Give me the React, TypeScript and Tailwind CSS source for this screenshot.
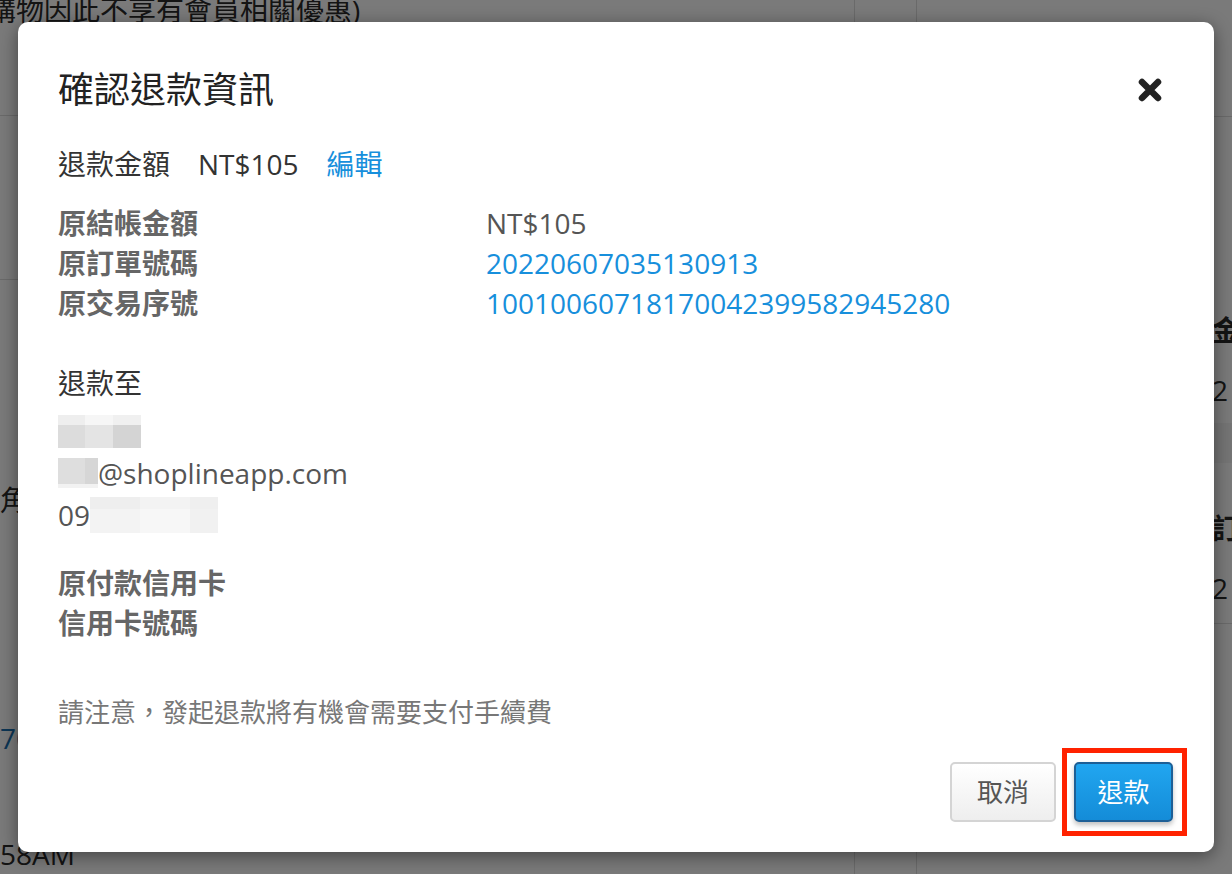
import React from 'react';

const font = { fontFamily: '"Open Sans", "Noto Sans CJK TC", sans-serif' };

const Backdrop: React.FC = () => {
  return (
    <div className="absolute inset-0 flex bg-white text-[#2a2a2a]">
      {/* left strip of the page behind */}
      <div className="flex w-[855px] flex-col overflow-hidden border-r border-[#ddd]">
        <div className="h-[117px] border-b border-[#ddd]">
          <div className="-mt-[10px] -ml-[12px] whitespace-nowrap text-[28px] leading-[40px]">
            購物因此不享有會員相關優惠)
          </div>
        </div>
        <div className="h-[166px] border-b border-[#ddd]" />
        <div className="h-[202px]" />
        <div className="text-[28px] leading-[40px]">角</div>
        <div className="h-[200px]" />
        <div className="text-[28px] leading-[40px] text-[#1a6fb0]">70</div>
        <div className="h-[77px]" />
        <div className="text-[28px] leading-[40px]">58AM</div>
      </div>
      <div className="w-[62px] border-r border-[#ddd]" />
      <div className="flex flex-1 flex-col overflow-hidden">
        <div className="h-[117px] border-b border-[#ddd]" />
        <div className="h-[193px]" />
        <div className="pl-[1197px] text-[0px]" />
        <div className="flex flex-col pl-[295px] text-[28px] leading-[40px]">
          <div className="font-bold">金</div>
          <div className="mt-[20px]">2</div>
          <div className="mt-[13px] h-[40px] bg-[#f4f4f4]" />
          <div className="mt-[45px] font-bold">訂</div>
          <div className="mt-[20px]">2</div>
          <div className="mt-[15px] border-b border-[#ddd]" />
        </div>
      </div>
    </div>
  );
};

const CloseIcon: React.FC = () => (
  <svg width="26" height="26" viewBox="0 0 26 26" className="text-[#222]">
    <path d="M5 5 L21 21 M21 5 L5 21" stroke="currentColor" strokeWidth="6.5" strokeLinecap="round" />
  </svg>
);

const Row: React.FC<{ label: string; value: string; blue?: boolean }> = ({ label, value, blue }) => (
  <div className="flex h-[40px] items-center">
    <div className="w-[428px] font-bold text-[#666]">{label}</div>
    <div className={blue ? 'text-[#178fdc]' : 'text-[#555]'}>{value}</div>
  </div>
);

export default function App() {
  return (
    <div className="relative h-[874px] w-[1232px] overflow-hidden" style={font}>
      <Backdrop />
      <div className="absolute inset-0 bg-black/[0.52]" />

      {/* modal */}
      <div className="absolute left-[18px] top-[22px] flex h-[830px] w-[1196px] flex-col rounded-[10px] bg-white pt-[44px] pr-[41px] pb-[30px] pl-[40px] text-[28px] shadow-[0_4px_18px_rgba(0,0,0,0.45)]">
        <div className="flex h-[48px] items-center justify-between pr-[10px]">
          <h2 className="text-[36px] leading-[48px] text-[#222]">確認退款資訊</h2>
          <button className="flex items-center justify-center">
            <CloseIcon />
          </button>
        </div>

        <div className="mt-[30px] flex h-[40px] items-center leading-[40px] text-[#333]">
          <span>退款金額</span>
          <span className="ml-[28px]">NT$105</span>
          <span className="ml-[28px] text-[#178fdc]">編輯</span>
        </div>

        <div className="mt-[19px] flex flex-col">
          <Row label="原結帳金額" value="NT$105" />
          <Row label="原訂單號碼" value="20220607035130913" blue />
          <Row label="原交易序號" value="10010060718170042399582945280" blue />
        </div>

        <div className="mt-[40px] h-[40px] leading-[40px] text-[#333]">退款至</div>
        <div className="mt-[7px] flex flex-col text-[#555]">
          <div className="flex h-[42px] items-start pt-[5px]">
            <div className="flex flex-col">
              <div className="flex h-[10px]">
                <div className="w-[27px] bg-[#eeeeee]" />
                <div className="w-[28px] bg-[#f6f6f6]" />
                <div className="w-[28px] bg-[#f0f0f0]" />
              </div>
              <div className="flex h-[23px]">
                <div className="w-[27px] bg-[#dcdcdc]" />
                <div className="w-[28px] bg-[#e4e4e4]" />
                <div className="w-[28px] bg-[#d4d4d4]" />
              </div>
            </div>
          </div>
          <div className="flex h-[42px] items-center">
            <div className="flex h-[30px] flex-col">
              <div className="flex h-[26px]">
                <div className="w-[27px] bg-[#dedede]" />
                <div className="w-[13px] bg-[#d6d6d6]" />
              </div>
              <div className="h-[4px] w-[40px] bg-[#f2f2f2]" />
            </div>
            <span className="leading-[40px]">@shoplineapp.com</span>
          </div>
          <div className="flex h-[42px] items-center">
            <span className="leading-[40px]">09</span>
            <div className="flex h-[36px] flex-col">
              <div className="flex h-[12px]">
                <div className="w-[50px] bg-[#eeeeee]" />
                <div className="w-[50px] bg-[#f3f3f3]" />
                <div className="w-[28px] bg-[#efefef]" />
              </div>
              <div className="flex h-[24px]">
                <div className="w-[50px] bg-[#f3f3f3]" />
                <div className="w-[50px] bg-[#f7f7f7]" />
                <div className="w-[28px] bg-[#f1f1f1]" />
              </div>
            </div>
          </div>
        </div>

        <div className="mt-[27px] flex flex-col font-bold leading-[40px] text-[#666]">
          <div className="h-[40px]">原付款信用卡</div>
          <div className="h-[40px]">信用卡號碼</div>
        </div>

        <div className="mt-[49px] h-[40px] text-[26px] leading-[40px] text-[#777]">
          請注意，發起退款將有機會需要支付手續費
        </div>

        <div className="mt-auto flex items-center justify-end gap-[18px]">
          <button className="h-[60px] w-[106px] rounded-[5px] border-2 border-[#d4d4d4] bg-gradient-to-b from-white to-[#eeeeee] text-[26px] text-[#555]">
            取消
          </button>
          <div className="relative">
            <button className="h-[60px] w-[99px] rounded-[5px] border-2 border-[#1d5f96] bg-gradient-to-b from-[#21a6f0] to-[#148cd8] text-[26px] text-white shadow-[0_3px_5px_rgba(0,0,0,0.25)]">
              退款
            </button>
            <div className="pointer-events-none absolute -top-[14px] -bottom-[14px] -left-[12px] -right-[14px] border-[5px] border-[#ff2200]" />
          </div>
        </div>
      </div>
    </div>
  );
}
